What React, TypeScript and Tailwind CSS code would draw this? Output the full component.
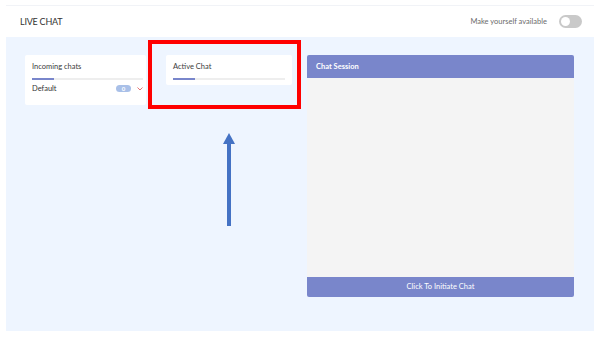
import React from 'react';

const font = { fontFamily: 'Lato, "Open Sans", sans-serif' };

const Toggle: React.FC = () => (
    <div className="w-[23px] h-[13px] rounded-full bg-[#c9c9c9] flex items-center px-[2px]">
        <div className="w-[9px] h-[9px] rounded-full bg-white"></div>
    </div>
);

const ListCard: React.FC<{ title: string; children?: React.ReactNode; width: string }> = ({ title, children, width }) => (
    <div className={`bg-white rounded-[2px] pl-[7px] pt-[7px] pb-[5px] ${width}`}>
        <p className="text-[7.5px] leading-[10px] text-[#3b3b3b]">{title}</p>
        <div className="mt-[6px] h-[2px] bg-[#eeeeee] relative">
            <div className="absolute left-0 top-0 h-[2px] w-[22px] bg-[#7986cb]"></div>
        </div>
        {children}
    </div>
);

const App: React.FC = () => {
    return (
        <div className="w-[600px] h-[337px] bg-white relative" style={font}>
            <div className="pl-[6px] pr-[6px] pt-[5px]">
                <div className="border-t border-[#f1f3f7] h-[32px] flex items-center justify-between pl-[14px] pr-[12px]">
                    <span className="text-[9px] text-[#333] tracking-tight">LIVE CHAT</span>
                    <div className="flex items-center gap-[12px]">
                        <span className="text-[7.5px] text-[#6b6b6b]">Make yourself available</span>
                        <Toggle />
                    </div>
                </div>
                <div className="h-[294px] bg-[#eef5ff] pt-[18px] pl-[19px] pr-[20px] flex gap-[15px]">
                    <div className="flex gap-[20px] items-start">
                        <ListCard title="Incoming chats" width="w-[121px] h-[50px] pr-[3px]">
                            <div className="flex items-center justify-between mt-[3px]">
                                <span className="text-[7.5px] text-[#333]">Default</span>
                                <div className="flex items-center gap-[6px]">
                                    <span className="w-[15px] h-[7px] rounded-full bg-[#a9c0e8] text-white text-[6px] leading-[7px] flex items-center justify-center font-bold">0</span>
                                    <svg width="6" height="4" viewBox="0 0 6 4">
                                        <path d="M0.5 0.5 L3 3 L5.5 0.5" stroke="#e57373" strokeWidth="1" fill="none" />
                                    </svg>
                                </div>
                            </div>
                        </ListCard>
                        <ListCard title="Active Chat" width="w-[126px] h-[30px] pr-[7px]" />
                    </div>
                    <div className="flex-1 h-[242px] flex flex-col rounded-[2px] overflow-hidden">
                        <div className="h-[23px] bg-[#7986cb] flex items-center px-[9px]">
                            <span className="text-[7.5px] text-white font-bold">Chat Session</span>
                        </div>
                        <div className="flex-1 bg-[#f4f4f4]"></div>
                        <div className="h-[20px] bg-[#7986cb] flex items-center justify-center">
                            <span className="text-[7.5px] text-white">Click To Initiate Chat</span>
                        </div>
                    </div>
                </div>
            </div>

            {/* annotation overlay */}
            <div className="absolute left-[148px] top-[40px] w-[153px] h-[69px] border-[4px] border-[#ff0000]"></div>
            <svg className="absolute left-[222px] top-[132px]" width="14" height="96" viewBox="0 0 14 96">
                <polygon points="7,1 13,12 1,12" fill="#4472c4" />
                <rect x="5" y="11" width="4" height="83" fill="#4472c4" />
            </svg>
        </div>
    );
};

export default App;
